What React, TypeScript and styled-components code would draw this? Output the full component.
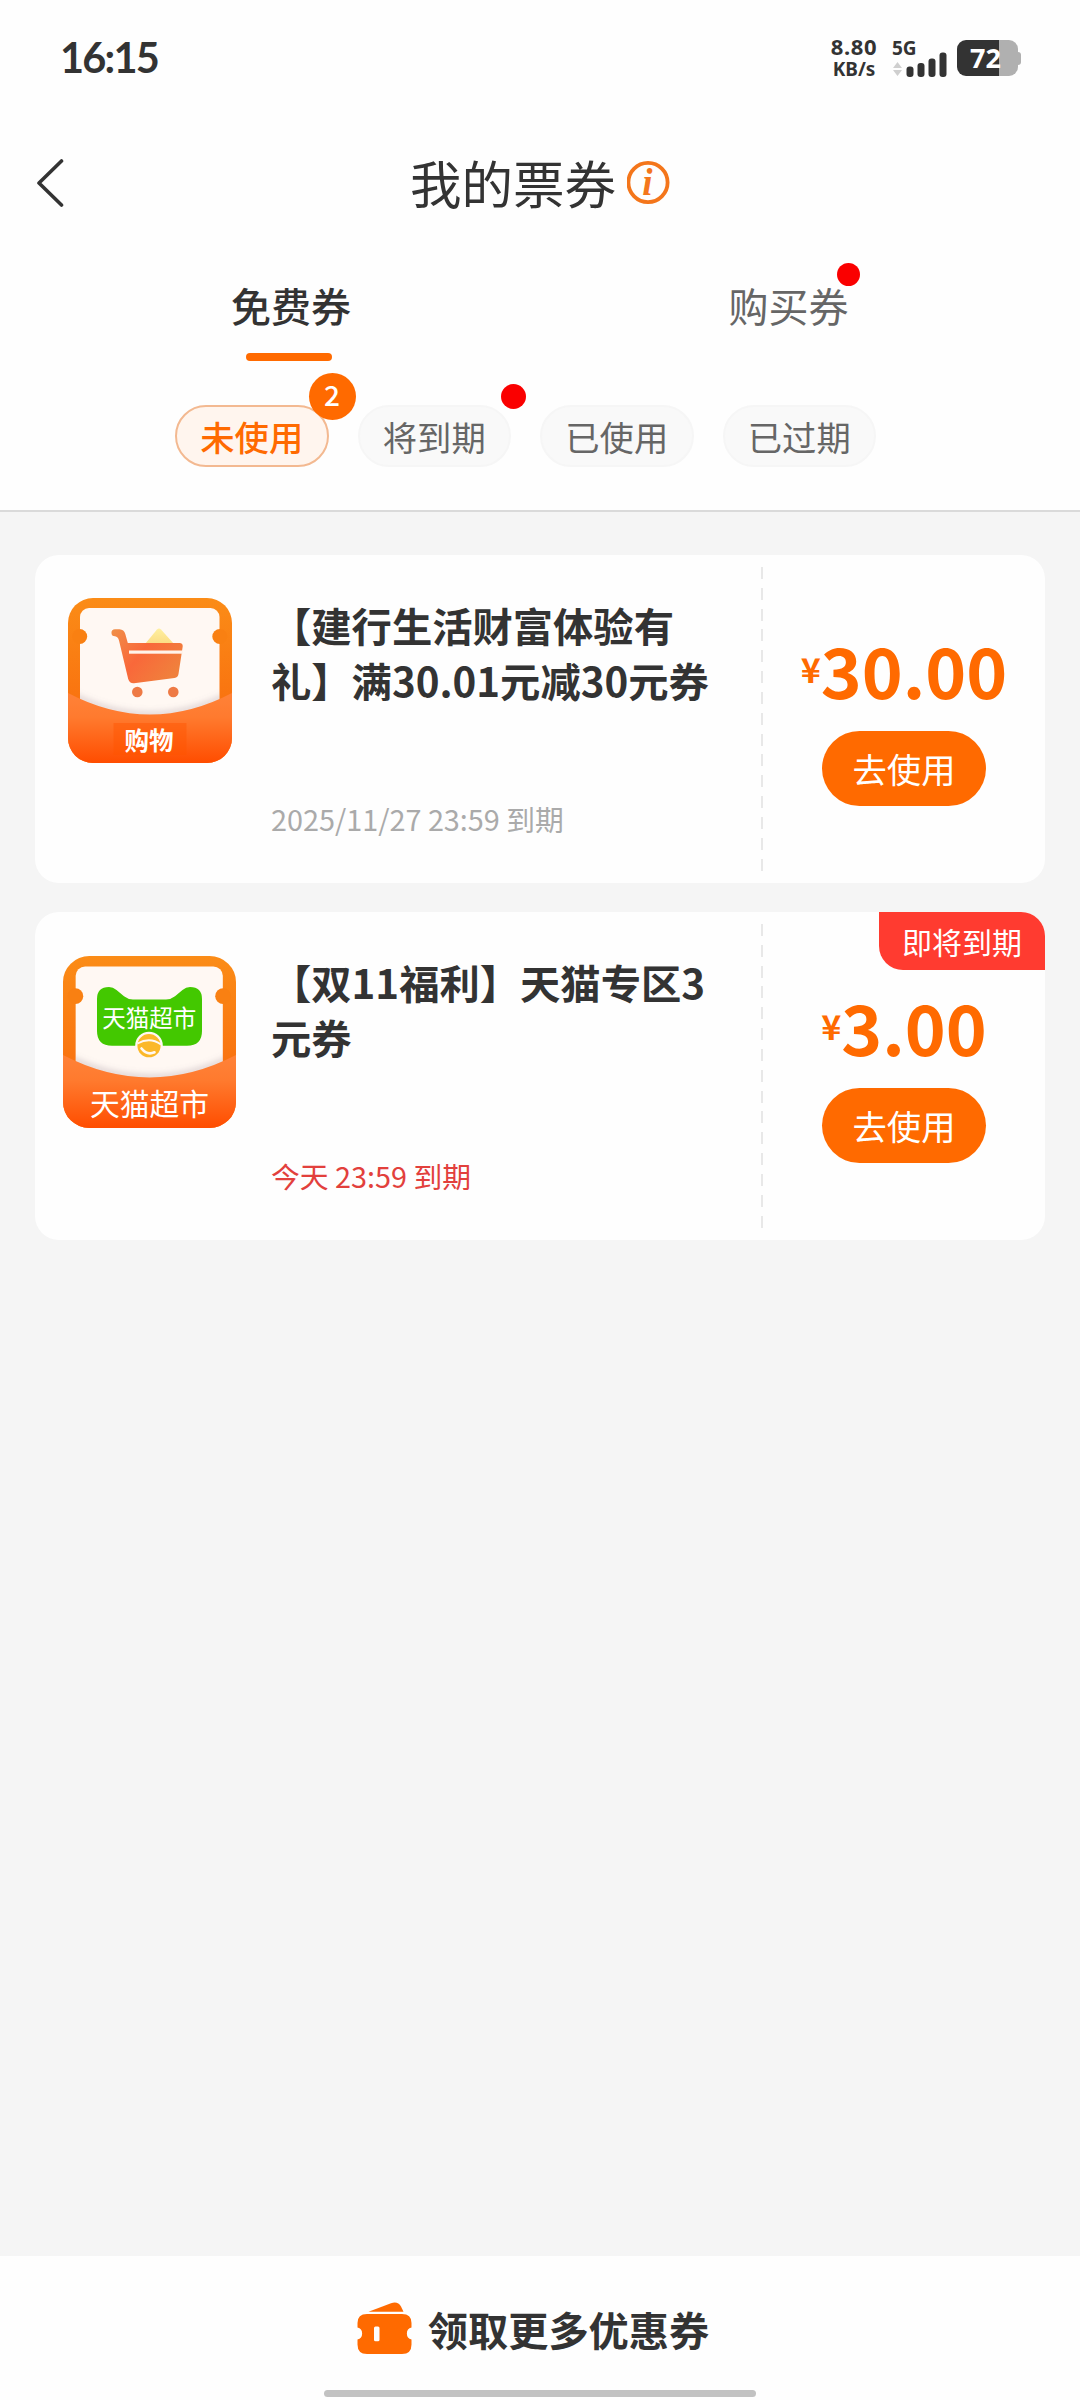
import React from "react";
import styled, { createGlobalStyle, css } from "styled-components";

const ORANGE = "#ff6a00";
const INK = "#333333";
const CJK = '"Noto Sans CJK SC", "Noto Sans", sans-serif';

const GlobalStyle = createGlobalStyle`
  *, *::before, *::after { box-sizing: border-box; }
  body { margin: 0; background: #f5f5f5; font-family: ${CJK}; color: ${INK}; }
  button { font: inherit; border: 0; background: none; padding: 0; margin: 0; color: inherit; }
  svg { display: block; flex: none; }
`;

const Screen = styled.div`
  width: 1080px;
  height: 2400px;
  display: flex;
  flex-direction: column;
  background: #f5f5f5;
  overflow: hidden;
`;

const Header = styled.header`
  height: 512px;
  flex: none;
  background: #fefefe;
  border-bottom: 2px solid #dadada;
  display: flex;
  flex-direction: column;
`;

/* Status bar */

const StatusBar = styled.div`
  height: 116px;
  padding: 0 60px 0 60px;
  display: flex;
  justify-content: space-between;
  align-items: center;
`;

const Clock = styled.span`
  font: 700 41.5px/1 Lato, "Noto Sans", sans-serif;
  letter-spacing: -1.8px;
  margin-top: -1px;
`;

const StatusRight = styled.div`
  display: flex;
  align-items: center;
`;

const Speed = styled.div`
  display: flex;
  flex-direction: column;
  align-items: center;
  width: 50px;
  margin: -1px 13px 0 0;
  font: 700 22px/23px "Noto Sans", sans-serif;
`;

const SpeedValue = styled.span`
  letter-spacing: 0.6px;
`;

const SpeedUnit = styled.span`
  font-size: 19px;
  line-height: 22px;
`;

const Signal = styled.div`
  width: 55px;
  height: 38px;
  margin-right: 10px;
  display: flex;
  flex-direction: column;
  position: relative;
`;

const NetLabel = styled.span`
  font: 700 19px/19px "Noto Sans", sans-serif;
`;

const SignalBars = styled.svg`
  position: absolute;
  left: 0;
  bottom: 0;
`;

const Battery = styled.div`
  width: 61px;
  height: 36px;
  border-radius: 9px;
  background: linear-gradient(90deg, ${INK} 42px, #b0b0b0 42px);
  display: flex;
  align-items: center;
  justify-content: center;
  color: #fff;
  font: 700 27px/36px "Noto Sans", sans-serif;
  padding-right: 4px;
`;

const BatteryTip = styled.div`
  width: 3px;
  height: 13px;
  border-radius: 0 3px 3px 0;
  background: #b0b0b0;
  margin-right: -1px;
`;

/* Title bar */

const TitleBar = styled.div`
  height: 132px;
  display: grid;
  grid-template-columns: 100px 1fr 100px;
  align-items: center;
`;

const BackButton = styled.button`
  display: flex;
  padding-left: 36px;
  margin-top: 1px;
`;

const Title = styled.h1`
  margin: 0;
  display: flex;
  justify-content: center;
  align-items: center;
  gap: 11px;
  font-size: 51.5px;
  font-weight: 400;
  line-height: 60px;
`;

/* Tabs */

const Tabs = styled.nav`
  height: 115px;
  padding: 30px 42px 0;
  display: grid;
  grid-template-columns: 1fr 1fr;
`;

const Tab = styled.button<{ $active?: boolean }>`
  display: flex;
  flex-direction: column;
  align-items: center;
  font-size: 40px;
  line-height: 54px;
  font-weight: ${(p) => (p.$active ? 500 : 400)};
  color: ${(p) => (p.$active ? INK : "#666")};
`;

const Anchor = styled.span`
  position: relative;
  margin-right: 1px;
`;

const Underline = styled.span`
  width: 86px;
  height: 8px;
  border-radius: 4px;
  background: ${ORANGE};
  margin: 21px 5px 0 0;
`;

const Dot = styled.i<{ $size: number; $top: number; $right: number }>`
  position: absolute;
  width: ${(p) => p.$size}px;
  height: ${(p) => p.$size}px;
  top: ${(p) => p.$top}px;
  right: ${(p) => p.$right}px;
  border-radius: 50%;
  background: #fa0000;
`;

/* Filters */

const Filters = styled.div`
  padding: 42px 0 0 175px;
  display: flex;
  gap: 29px;
`;

const Pill = styled.button<{ $active?: boolean }>`
  position: relative;
  width: 153.5px;
  height: 62px;
  border-radius: 31px;
  border: 2px solid #f6f6f6;
  background: #f9f9f9;
  color: #666;
  font-size: 34.3px;
  line-height: 58px;
  ${(p) =>
    p.$active &&
    css`
      border-color: #f3b991;
      background: #fff5ee;
      color: ${ORANGE};
      font-weight: 500;
    `}
`;

const Count = styled.span`
  position: absolute;
  top: -34px;
  right: -29px;
  width: 47px;
  height: 47px;
  border-radius: 50%;
  background: ${ORANGE};
  color: #fff;
  font-size: 28px;
  line-height: 43px;
  text-align: center;
`;

/* Coupons */

const List = styled.main`
  flex: 1;
  padding: 43px 35px 0;
  display: flex;
  flex-direction: column;
  gap: 29px;
`;

const Card = styled.article`
  position: relative;
  height: 328px;
  border-radius: 24px;
  background: #fefefe;
  display: flex;
`;

const Thumb = styled.div<{ $top: number }>`
  width: 229px;
  padding-top: ${(p) => p.$top}px;
  flex: none;
  display: flex;
  align-items: flex-start;
  justify-content: center;
`;

const Info = styled.div`
  width: 497px;
  flex: none;
  padding: 42px 40px 44px 7px;
  display: flex;
  flex-direction: column;
  justify-content: space-between;
`;

const Name = styled.h2`
  margin: 0;
  font-size: 40.3px;
  line-height: 55.3px;
  font-weight: 700;
  white-space: pre-line;
  text-spacing-trim: space-all;
`;

const Expiry = styled.p<{ $urgent?: boolean }>`
  margin: 0;
  font-size: 28.8px;
  line-height: 40px;
  color: ${(p) => (p.$urgent ? "#e2403c" : "#aaa")};
`;

const Perforation = styled.div`
  width: 2px;
  height: 304px;
  margin-top: 12px;
  flex: none;
  background: repeating-linear-gradient(180deg, #e8e8e8 0 12px, transparent 12px 20.83px);
`;

const Action = styled.div`
  flex: 1;
  display: flex;
  flex-direction: column;
  align-items: center;
  padding-top: 64px;
`;

const Price = styled.div`
  height: 100px;
  display: flex;
  align-items: center;
  color: ${ORANGE};
  font-weight: 700;
  font-size: 69.5px;
  line-height: 100px;
`;

const Currency = styled.span`
  font-size: 34px;
`;

const UseButton = styled.button`
  margin-top: 12px;
  width: 164px;
  height: 75px;
  border-radius: 37.5px;
  background: ${ORANGE};
  color: #fff;
  font-size: 34.3px;
  line-height: 75px;
`;

const Ribbon = styled.div`
  position: absolute;
  top: 0;
  right: 0;
  width: 166px;
  height: 58px;
  border-radius: 0 24px 0 24px;
  background: #ff3b30;
  color: #fff;
  font-size: 30px;
  line-height: 58px;
  text-align: center;
`;

/* Footer */

const Footer = styled.footer`
  height: 144px;
  flex: none;
  background: #fefefe;
  display: flex;
  flex-direction: column;
  align-items: center;
`;

const MoreLink = styled.button`
  height: 134px;
  padding: 12px 14px 0 0;
  display: flex;
  align-items: center;
  gap: 15px;
  font-size: 40.2px;
  line-height: 60px;
  font-weight: 700;
`;

const HomeIndicator = styled.div`
  width: 432px;
  height: 7px;
  border-radius: 4px;
  background: #c2c2c2;
`;

/* Drawings */

const BackIcon = () => (
  <svg width="28" height="50" viewBox="0 0 28 50" fill="none" stroke={INK} strokeWidth="3.6" strokeLinecap="round" strokeLinejoin="round">
    <path d="M25.5 3 3 25 25.5 47" />
  </svg>
);

const InfoIcon = () => (
  <svg width="43" height="43" viewBox="0 0 43 43">
    <circle cx="21" cy="21.5" r="19.6" fill="none" stroke="#f4761b" strokeWidth="3.8" />
    <text x="20.5" y="33.5" textAnchor="middle" fontFamily='"Liberation Serif", serif' fontWeight="700" fontStyle="italic" fontSize="37" fill="#f4761b">
      i
    </text>
  </svg>
);

const SignalIcon = () => (
  <SignalBars width="55" height="26" viewBox="0 0 55 26">
    <path d="M5.5 11 10 17H1ZM5.5 25 10 19H1Z" fill="#cfcfcf" />
    <g fill={INK}>
      <rect x="14.500" y="15.500" width="7" height="10.500" rx="3" />
      <rect x="25.500" y="12" width="7" height="14" rx="3" />
      <rect x="36.500" y="7.500" width="7" height="18.500" rx="3" />
      <rect x="47.500" y="1.500" width="7" height="24.500" rx="3" />
    </g>
  </SignalBars>
);

type FrameProps = { id: string; width: number; height: number; children: React.ReactNode };

const CouponFrame = ({ id, width, height, children }: FrameProps) => (
  <svg width={width} height={height} viewBox={`0 0 ${width} ${height}`}>
    <defs>
      <linearGradient id={`${id}-back`} x1="0" y1="0" x2="0" y2="1">
        <stop offset="0" stopColor="#fb8c17" />
        <stop offset="0.6" stopColor="#f97410" />
      </linearGradient>
      <linearGradient id={`${id}-pocket`} x1="0" y1="0" x2="0" y2="1">
        <stop offset="0" stopColor="#ff8238" />
        <stop offset="0.35" stopColor="#ff7a2e" />
        <stop offset="1" stopColor="#ff4d00" />
      </linearGradient>
      <clipPath id={`${id}-clip`}>
        <rect width="164" height="165" rx="25" />
      </clipPath>
      <clipPath id={`${id}-ticket`}>
        <rect x="12" y="10" width="139.5" height="140" rx="9" />
      </clipPath>
      <filter id={`${id}-soft`} x="-20%" y="-20%" width="140%" height="140%">
        <feGaussianBlur stdDeviation="3" />
      </filter>
    </defs>
    <g transform={`scale(${width / 164} ${height / 165})`} clipPath={`url(#${id}-clip)`}>
      <rect width="164" height="165" fill={`url(#${id}-back)`} />
      <rect x="12" y="10" width="139.5" height="140" rx="9" fill="#fff8f3" />
      <g clipPath={`url(#${id}-ticket)`}>
        <path d="M0 95Q82 138 164 95" fill="none" stroke="#8a7480" strokeOpacity="0.32" strokeWidth="5" filter={`url(#${id}-soft)`} />
      </g>
      <circle cx="11.7" cy="38.5" r="7.5" fill="#f98012" />
      <circle cx="151.8" cy="38.5" r="7.5" fill="#f98012" />
      <path d="M0 95Q82 138 164 95V165H0Z" fill={`url(#${id}-pocket)`} />
    </g>
    {children}
  </svg>
);

const ShoppingCoupon = () => (
  <CouponFrame id="shop" width={164} height={165}>
    <defs>
      <linearGradient id="cart" x1="0" y1="0" x2="1" y2="0.6">
        <stop offset="0" stopColor="#f09048" />
        <stop offset="0.5" stopColor="#f9683a" />
        <stop offset="1" stopColor="#f0803c" />
      </linearGradient>
      <linearGradient id="parcel" x1="0" y1="0" x2="0" y2="1">
        <stop offset="0" stopColor="#fff0a0" />
        <stop offset="1" stopColor="#fbdc84" />
      </linearGradient>
    </defs>
    <path d="M77 46 89 31.5Q91 29.500 93 31.5L106 46Z" fill="url(#parcel)" />
    <path
      d="M47 31.200H51.500Q56 31.500 57.300 36L59.800 45H111.500Q115 45 114.700 48.500L110.500 76Q110 79.300 106.500 80L66 85.200Q61.500 85.500 60.200 81L51 42.500Q50 38.800 47 38.300A3.500 3.500 0 0 1 47 31.200Z"
      fill="url(#cart)"
    />
    <rect x="61" y="52.500" width="54" height="3.200" fill="#fff3ea" />
    <circle cx="69.300" cy="94" r="5.300" fill="#ee7a45" />
    <circle cx="105.300" cy="94" r="5.300" fill="#ee7a45" />
    <rect x="45.500" y="125" width="73" height="32" fill="#ff5500" opacity="0.45" />
    <text x="81" y="151.800" textAnchor="middle" fontFamily={CJK} fontWeight="700" fontSize="24.500" fill="#fff">
      购物
    </text>
  </CouponFrame>
);

const TmallCoupon = () => (
  <CouponFrame id="tmall" width={173} height={172}>
    <path
      d="M34 43Q34 31 46 31Q50 31 53.500 34L61 40.300Q65 43.500 70 43.500H103Q108 43.500 112 40.300L119.500 34Q123 31 127 31Q139 31 139 43V75Q139 89.700 124 89.700H49Q34 89.700 34 75Z"
      fill="#43c800"
    />
    <text x="86.300" y="71" textAnchor="middle" fontFamily={CJK} fontWeight="400" fontSize="23.500" fill="#fff">
      天猫超市
    </text>
    <circle cx="86" cy="89.500" r="13.800" fill="#fff8f3" />
    <circle cx="86" cy="89.700" r="11.600" fill="#fbb829" />
    <path d="M74.500 87.500Q87 80.500 98 88.500" fill="none" stroke="#fff8f3" strokeWidth="2" />
    <path d="M78.500 92.500Q84 99.500 91.500 96.300" fill="none" stroke="#fff8f3" strokeWidth="2.600" strokeLinecap="round" />
    <text x="86.500" y="158.500" textAnchor="middle" fontFamily={CJK} fontWeight="400" fontSize="29.800" fill="#fff">
      天猫超市
    </text>
  </CouponFrame>
);

const TicketIcon = () => (
  <svg width="56" height="54" viewBox="0 0 56 54" fill={ORANGE}>
    <path d="M11.500 9.800 34 1.200Q41-1 44 4.500L46.500 9.800Z" />
    <path
      fillRule="evenodd"
      d="M10 12H45Q54.500 12 54.500 21V25.500A6.200 6.200 0 0 0 54.500 37.500V42.500Q54.500 52 45 52H10Q.5 52 .5 42.500V37.500A6.200 6.200 0 0 0 .5 25.500V21Q.5 12 10 12ZM18.500 24.500Q17 24.500 17 26V37.800Q17 39.300 18.500 39.300H21Q22.500 39.300 22.500 37.800V26Q22.500 24.500 21 24.500Z"
    />
  </svg>
);

/* Page */

type Coupon = {
  art: React.ReactNode;
  artTop: number;
  name: string;
  expiry: string;
  amount: string;
  urgent?: boolean;
};

const coupons: Coupon[] = [
  {
    art: <ShoppingCoupon />,
    artTop: 43,
    name: "【建行生活财富体验有\n礼】满30.01元减30元券",
    expiry: "2025/11/27 23:59 到期",
    amount: "30.00",
  },
  {
    art: <TmallCoupon />,
    artTop: 44,
    name: "【双11福利】天猫专区3\n元券",
    expiry: "今天 23:59 到期",
    amount: "3.00",
    urgent: true,
  },
];

const CouponCard = ({ art, artTop, name, expiry, amount, urgent }: Coupon) => (
  <Card>
    <Thumb $top={artTop}>{art}</Thumb>
    <Info>
      <Name>{name}</Name>
      <Expiry $urgent={urgent}>{expiry}</Expiry>
    </Info>
    <Perforation />
    <Action>
      <Price>
        <Currency>¥</Currency>
        {amount}
      </Price>
      <UseButton>去使用</UseButton>
    </Action>
    {urgent && <Ribbon>即将到期</Ribbon>}
  </Card>
);

export default function App() {
  return (
    <Screen>
      <GlobalStyle />
      <Header>
        <StatusBar>
          <Clock>16:15</Clock>
          <StatusRight>
            <Speed>
              <SpeedValue>8.80</SpeedValue>
              <SpeedUnit>KB/s</SpeedUnit>
            </Speed>
            <Signal>
              <NetLabel>5G</NetLabel>
              <SignalIcon />
            </Signal>
            <Battery>72</Battery>
            <BatteryTip />
          </StatusRight>
        </StatusBar>
        <TitleBar>
          <BackButton aria-label="返回">
            <BackIcon />
          </BackButton>
          <Title>
            我的票券
            <InfoIcon />
          </Title>
        </TitleBar>
        <Tabs>
          <Tab $active>
            免费券
            <Underline />
          </Tab>
          <Tab>
            <Anchor>
              购买券
              <Dot $size={23} $top={-15} $right={-11} />
            </Anchor>
          </Tab>
        </Tabs>
        <Filters>
          <Pill $active>
            未使用
            <Count>2</Count>
          </Pill>
          <Pill>
            将到期
            <Dot $size={25} $top={-23} $right={-17} />
          </Pill>
          <Pill>已使用</Pill>
          <Pill>已过期</Pill>
        </Filters>
      </Header>
      <List>
        {coupons.map((c) => (
          <CouponCard key={c.name} {...c} />
        ))}
      </List>
      <Footer>
        <MoreLink>
          <TicketIcon />
          领取更多优惠券
        </MoreLink>
        <HomeIndicator />
      </Footer>
    </Screen>
  );
}
